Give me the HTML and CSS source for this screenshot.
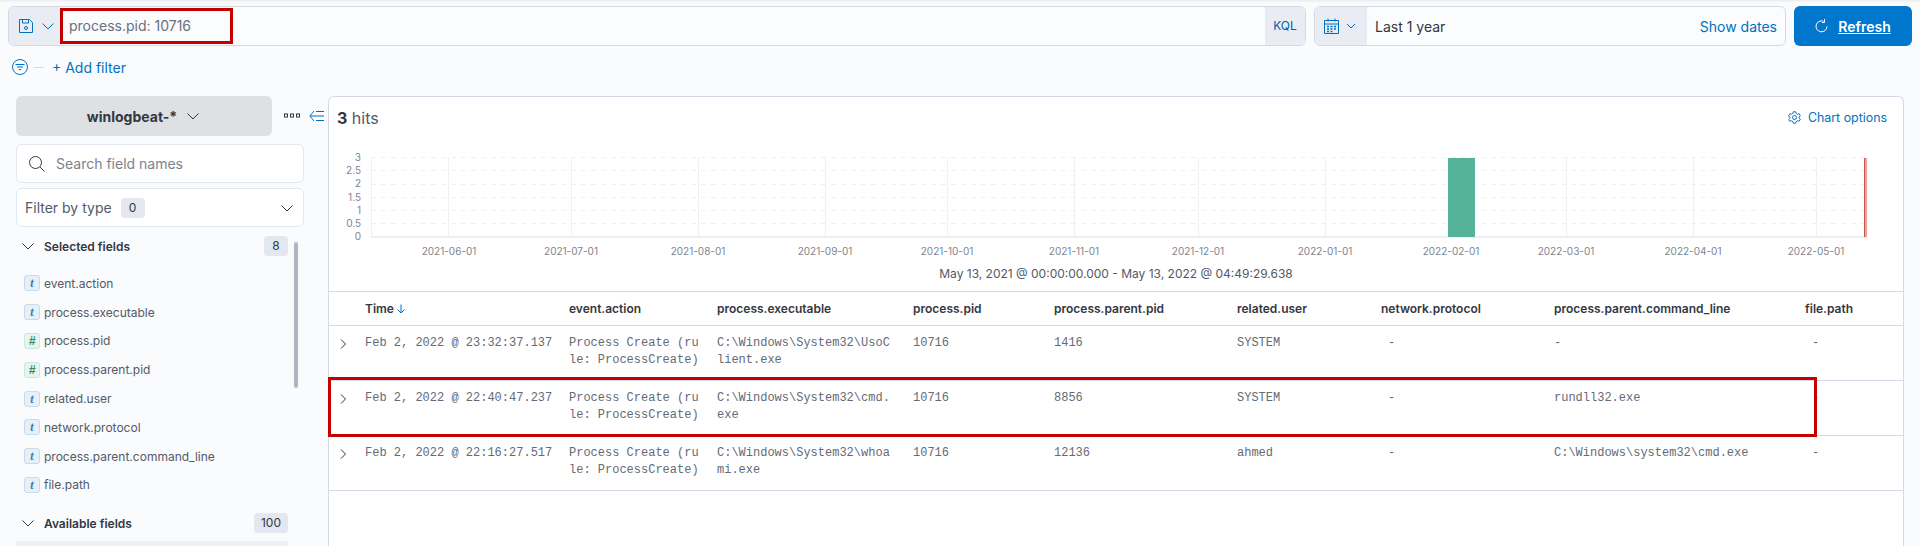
FILE: index.html
```html
<!DOCTYPE html>
<html lang="en">
<head>
  <meta charset="UTF-8" />
  <title>Discover</title>
  <link rel="stylesheet" href="styles.css">
</head>
<body>
  <div class="top-bar">
    <div class="query-group">
      <div class="save-btn">
        <svg width="16" height="16" viewBox="0 0 16 16" fill="none" stroke="#0071c2"><path d="M1.5 1.5h10l3 3v10h-13z"/><path d="M4.5 1.5v3.5h6v-3.5"/><circle cx="8" cy="10" r="1.5"/></svg>
        <svg class="chev" width="14" height="14" viewBox="0 0 14 14" fill="none" stroke="#0071c2"><path d="M1.5 4.5 7 10l5.5-5.5"/></svg>
      </div>
      <div class="query-input">process.pid: 10716</div>
      <div class="kql">KQL</div>
      <div class="query-mark"></div>
    </div>
    <div class="date-group">
      <div class="date-btn">
        <svg width="15" height="16" viewBox="0 0 15 16" fill="none" stroke="#0071c2"><path d="M.5 2.5h14v13H.5zM.5 6h14M4 .5v3M11 .5v3"/><path d="M3 8.500h2M6.500 8.500h2M10 8.500h2M3 11h2M6.500 11h2M10 11h2M3 13.500h2M6.500 13.500h2" stroke-width="1.400"/></svg>
        <svg width="10" height="10" viewBox="0 0 10 10" fill="none" stroke="#0071c2"><path d="M1 3l4 4 4-4"/></svg>
      </div>
      <div class="date-text">Last 1 year</div>
      <div class="show-dates">Show dates</div>
    </div>
    <div class="refresh-btn">
      <svg width="13" height="14" viewBox="0 0 13 14" fill="none" stroke="#fff"><path d="M8.500 2.200A5.500 5.500 0 1 0 12 7.500"/><path d="M9.500 0v3.500H6.800"/></svg>
      <span>Refresh</span>
    </div>
  </div>

  <div class="filter-bar">
    <svg width="16" height="16" viewBox="0 0 16 16" fill="none" stroke="#0071c2"><circle cx="8" cy="8" r="7.500"/><path d="M3.500 5.500h9M5 8h6M6.800 10.500h2.400"/></svg>
    <span class="filter-dash"></span>
    <span class="add-filter">+ Add filter</span>
  </div>

  <div class="main">
    <div class="sidebar">
      <div class="index-row">
        <div class="index-btn">
          <span>winlogbeat-*</span>
          <svg width="12" height="12" viewBox="0 0 12 12" fill="none" stroke="#343741"><path d="M.5 3.500 6 9l5.500-5.500"/></svg>
        </div>
        <svg class="dots" width="16" height="6" viewBox="0 0 16 6" fill="none" stroke="#343741"><rect x=".5" y="1" width="3" height="3"/><rect x="6.500" y="1" width="3" height="3"/><rect x="12.500" y="1" width="3" height="3"/></svg>
        <svg class="collapse" width="15" height="12" viewBox="0 0 15 12" fill="none" stroke="#0071c2"><path d="M5 1 .8 6 5 11M1 6h14M7 1.500h8M7 10.500h8"/></svg>
      </div>
      <div class="search-box">
        <svg width="16" height="16" viewBox="0 0 16 16" fill="none" stroke="#343741"><circle cx="6.500" cy="6.500" r="6"/><path d="m11 11 4.500 4.500"/></svg>
        <span>Search field names</span>
      </div>
      <div class="type-filter">
        <span>Filter by type</span>
        <span class="badge type-badge">0</span>
        <svg width="12" height="12" viewBox="0 0 12 12" fill="none" stroke="#343741"><path d="M.5 3.500 6 9l5.500-5.500"/></svg>
      </div>

      <div class="field-head selected-head">
        <svg width="12" height="12" viewBox="0 0 12 12" fill="none" stroke="#343741"><path d="M.5 3.500 6 9l5.500-5.500"/></svg>
        <span class="field-title">Selected fields</span>
        <span class="badge">8</span>
      </div>
      <div class="scrollbar"></div>
      <ul class="field-list">
        <li><span class="token">t</span>event.action</li>
        <li><span class="token">t</span>process.executable</li>
        <li><span class="token num">#</span>process.pid</li>
        <li><span class="token num">#</span>process.parent.pid</li>
        <li><span class="token">t</span>related.user</li>
        <li><span class="token">t</span>network.protocol</li>
        <li><span class="token">t</span>process.parent.command_line</li>
        <li><span class="token">t</span>file.path</li>
      </ul>
      <div class="field-head">
        <svg width="12" height="12" viewBox="0 0 12 12" fill="none" stroke="#343741"><path d="M.5 3.500 6 9l5.500-5.500"/></svg>
        <span class="field-title">Available fields</span>
        <span class="badge">100</span>
      </div>
      <div class="field-highlight"></div>
    </div>

    <div class="panel">
      <div class="hits-row">
        <div class="hits"><b>3</b> hits</div>
        <div class="chart-options">
          <svg width="13" height="13" viewBox="0 0 16 16" fill="none" stroke="#0071c2" stroke-width="1.200"><circle cx="8" cy="8" r="2.500"/><path d="M6.500 1h3l.5 2 1.700 1 2-.6 1.500 2.600-1.500 1.400v1.200l1.500 1.400-1.500 2.600-2-.6-1.700 1-.5 2h-3l-.5-2-1.700-1-2 .6L.8 10.600l1.500-1.400V8L.8 6l1.500-2.600 2 .6L6 3z"/></svg>
          <span>Chart options</span>
        </div>
      </div>

      <svg class="chart" width="1574" height="163" viewBox="329 128 1574 163">
        <g stroke="#f0f1f4" stroke-dasharray="5 5">
          <path d="M371 157.500H1867M371 170.500H1867M371 184.500H1867M371 197.500H1867M371 210.500H1867M371 223.500H1867"/>
        </g>
        <g stroke="#eef0f3">
          <path d="M371.500 157V237M448.500 157V237M571.500 157V237M698.500 157V237M825.500 157V237M947.500 157V237M1074.500 157V237M1198.500 157V237M1325.500 157V237M1452.500 157V237M1566.500 157V237M1693.500 157V237M1816.500 157V237"/>
          <path d="M371 237H1867" stroke-width="2"/>
        </g>
        <rect x="1448" y="158" width="27" height="79" fill="#54b399"/>
        <rect x="1864" y="158" width="1" height="79" fill="#c8544a"/>
        <rect x="1865" y="158" width="2" height="79" fill="#e7a49d"/>
        <g class="y-labels">
          <text x="361" y="161">3</text>
          <text x="361" y="174">2.5</text>
          <text x="361" y="187">2</text>
          <text x="361" y="201">1.5</text>
          <text x="361" y="214">1</text>
          <text x="361" y="227">0.5</text>
          <text x="361" y="240">0</text>
        </g>
        <g class="x-labels">
          <text x="449" y="255">2021-06-01</text>
          <text x="571" y="255">2021-07-01</text>
          <text x="698" y="255">2021-08-01</text>
          <text x="825" y="255">2021-09-01</text>
          <text x="947" y="255">2021-10-01</text>
          <text x="1074" y="255">2021-11-01</text>
          <text x="1198" y="255">2021-12-01</text>
          <text x="1325" y="255">2022-01-01</text>
          <text x="1451" y="255">2022-02-01</text>
          <text x="1566" y="255">2022-03-01</text>
          <text x="1693" y="255">2022-04-01</text>
          <text x="1816" y="255">2022-05-01</text>
        </g>
        <text class="range-label" x="1116" y="278">May 13, 2021 @ 00:00:00.000 - May 13, 2022 @ 04:49:29.638</text>
      </svg>

      <table class="docs">
        <colgroup>
          <col class="c-toggle"><col class="c-time"><col class="c-action"><col class="c-exec"><col class="c-pid">
          <col class="c-ppid"><col class="c-user"><col class="c-net"><col class="c-cmd"><col class="c-file">
        </colgroup>
        <thead>
          <tr>
            <th></th>
            <th>Time <svg width="10" height="10" viewBox="0 0 10 10" fill="none" stroke="#0071c2"><path d="M5 .5V9M1.500 5.500 5 9l3.500-3.500"/></svg></th>
            <th>event.action</th>
            <th>process.executable</th>
            <th>process.pid</th>
            <th>process.parent.pid</th>
            <th>related.user</th>
            <th>network.protocol</th>
            <th>process.parent.command_line</th>
            <th>file.path</th>
          </tr>
        </thead>
        <tbody>
          <tr>
            <td class="toggle"><svg width="6" height="10" viewBox="0 0 6 10" fill="none" stroke="#343741"><path d="m1 .5 4.500 4.500L1 9.500"/></svg></td>
            <td class="time">Feb 2, 2022 @ 23:32:37.137</td>
            <td>Process Create (rule: ProcessCreate)</td>
            <td>C:\Windows\System32\UsoClient.exe</td>
            <td>10716</td>
            <td>1416</td>
            <td>SYSTEM</td>
            <td class="dash">-</td>
            <td>-</td>
            <td class="dash">-</td>
          </tr>
          <tr>
            <td class="toggle"><svg width="6" height="10" viewBox="0 0 6 10" fill="none" stroke="#343741"><path d="m1 .5 4.500 4.500L1 9.500"/></svg></td>
            <td class="time">Feb 2, 2022 @ 22:40:47.237</td>
            <td>Process Create (rule: ProcessCreate)</td>
            <td>C:\Windows\System32\cmd.exe</td>
            <td>10716</td>
            <td>8856</td>
            <td>SYSTEM</td>
            <td class="dash">-</td>
            <td>rundll32.exe</td>
            <td class="dash">-</td>
          </tr>
          <tr>
            <td class="toggle"><svg width="6" height="10" viewBox="0 0 6 10" fill="none" stroke="#343741"><path d="m1 .5 4.500 4.500L1 9.500"/></svg></td>
            <td class="time">Feb 2, 2022 @ 22:16:27.517</td>
            <td>Process Create (rule: ProcessCreate)</td>
            <td>C:\Windows\System32\whoami.exe</td>
            <td>10716</td>
            <td>12136</td>
            <td>ahmed</td>
            <td class="dash">-</td>
            <td>C:\Windows\system32\cmd.exe</td>
            <td class="dash">-</td>
          </tr>
        </tbody>
      </table>
      <div class="row-mark"></div>
    </div>
  </div>
</body>
</html>
```

FILE: styles.css
```css
* {
  box-sizing: border-box;
}

html, body {
  height: 100%;
}

body {
  margin: 0;
  overflow: hidden;
  font-family: Inter, "Liberation Sans", sans-serif;
  font-size: 14px;
  color: #343741;
  background-color: #fafbfd;
  box-shadow: inset 0 3px 3px -2px rgba(0, 0, 0, 0.08);
}

/* top bar */
.top-bar {
  display: flex;
  gap: 8px;
  height: 46px;
  padding: 6px 8px 0;
}

.query-group {
  position: relative;
  display: flex;
  width: 1298px;
  height: 40px;
  background: #fbfcfd;
  border: 1px solid #d3dae6;
  border-radius: 6px;
  overflow: hidden;
}

.save-btn {
  display: flex;
  align-items: center;
  gap: 7px;
  width: 51px;
  padding-left: 9px;
  background: #e9edf3;
}

.query-input {
  flex: 1;
  padding-left: 9px;
  line-height: 38px;
  color: #69707d;
}

.kql {
  width: 40px;
  font-size: 12px;
  line-height: 38px;
  text-align: center;
  color: #0061a6;
  background: #e9edf3;
}

.query-mark {
  position: absolute;
  left: 51px;
  top: 1px;
  width: 173px;
  height: 36px;
  border: 3px solid #c40000;
}

.date-group {
  display: flex;
  align-items: center;
  width: 472px;
  height: 40px;
  background: #fbfcfd;
  border: 1px solid #d3dae6;
  border-radius: 6px;
  overflow: hidden;
}

.date-btn {
  display: flex;
  align-items: center;
  gap: 7px;
  width: 52px;
  height: 100%;
  padding-left: 9px;
  background: #e9edf3;
}

.date-text {
  flex: 1;
  padding-left: 8px;
  color: #343741;
}

.show-dates {
  padding-right: 8px;
  color: #0071c2;
}

.refresh-btn {
  display: flex;
  align-items: center;
  justify-content: center;
  gap: 10px;
  flex: 1;
  height: 40px;
  font-weight: 600;
  color: #fff;
  background: #0077cc;
  border-radius: 6px;
}

.refresh-btn span {
  text-decoration: underline;
}

/* filter bar */
.filter-bar {
  display: flex;
  align-items: center;
  height: 50px;
  padding: 0 12px 8px;
}

.filter-dash {
  width: 10px;
  height: 1px;
  margin: 0 8px 0 6px;
  background: #d3dae6;
}

.add-filter {
  color: #0071c2;
}

/* layout */
.main {
  display: flex;
  height: 450px;
}

.sidebar {
  position: relative;
  flex: none;
  width: 328px;
  padding-left: 16px;
}

.index-row {
  display: flex;
  align-items: center;
}

.index-btn {
  display: flex;
  align-items: center;
  justify-content: center;
  gap: 10px;
  width: 256px;
  height: 40px;
  padding-right: 2px;
  font-weight: 700;
  background: #dfe0e4;
  border-radius: 6px;
}

.dots {
  margin-left: 12px;
}

.collapse {
  margin-left: 9px;
}

.search-box {
  display: flex;
  align-items: center;
  gap: 11px;
  width: 288px;
  height: 39px;
  margin-top: 8px;
  padding-left: 12px;
  color: #7b828e;
  background: #fff;
  border: 1px solid #e4e8f0;
  border-radius: 6px;
}

.type-filter {
  display: flex;
  align-items: center;
  width: 288px;
  height: 39px;
  margin-top: 5px;
  padding: 0 10px 0 8px;
  color: #535966;
  background: #fff;
  border: 1px solid #e4e8f0;
  border-radius: 6px;
}

.type-badge {
  margin-left: 9px;
  margin-right: auto;
}

.badge {
  min-width: 24px;
  padding: 0 7px;
  font-size: 12px;
  line-height: 20px;
  text-align: center;
  color: #343741;
  background: #e3e7ef;
  border-radius: 4px;
}

.field-head {
  display: flex;
  align-items: center;
  width: 272px;
  height: 20px;
  padding-left: 6px;
}

.selected-head {
  margin-top: 9px;
}

.field-title {
  flex: 1;
  margin-left: 10px;
  font-size: 12px;
  font-weight: 600;
}

.scrollbar {
  position: absolute;
  left: 294px;
  top: 146px;
  width: 4px;
  height: 146px;
  background: #b1b6c0;
  border-radius: 2px;
}

.field-list {
  margin: 13px 0 14px;
  padding: 0;
  list-style: none;
}

.field-list li {
  display: flex;
  align-items: center;
  height: 28.8px;
  padding-left: 8px;
  font-size: 12px;
  color: #535966;
}

.token {
  width: 16px;
  height: 16px;
  margin-right: 4px;
  font-family: "Liberation Serif", serif;
  font-size: 12px;
  font-style: italic;
  font-weight: 700;
  line-height: 14px;
  text-align: center;
  color: #3e7ba6;
  background: #e6f0f8;
  border: 1px solid #c6dced;
  border-radius: 3px;
}

.token.num {
  font-family: "Liberation Sans", sans-serif;
  color: #2f8a6b;
  background: #e6f5f0;
  border-color: #cbe9de;
}

.field-highlight {
  width: 272px;
  height: 8px;
  margin-top: 8px;
  background: #e9f2f9;
}

/* main panel */
.panel {
  position: relative;
  width: 1576px;
  background: #fff;
  border: 1px solid #d3dae6;
  border-bottom: none;
  border-radius: 6px 6px 0 0;
}

.hits-row {
  display: flex;
  align-items: center;
  justify-content: space-between;
  height: 31px;
  padding: 10px 16px 0 8px;
}

.hits {
  font-size: 16px;
  color: #535966;
}

.hits b {
  color: #343741;
}

.chart-options {
  display: flex;
  align-items: center;
  gap: 7px;
  font-size: 12.4px;
  color: #0071c2;
}

.chart {
  display: block;
}

.y-labels text {
  font-size: 10px;
  text-anchor: end;
  fill: #7e8490;
}

.x-labels text {
  font-size: 10px;
  text-anchor: middle;
  fill: #7e8490;
}

.range-label {
  font-size: 12px;
  text-anchor: middle;
  fill: #535966;
}

/* documents table */
.docs {
  width: 1574px;
  table-layout: fixed;
  border-collapse: collapse;
  border-top: 1px solid #d3dae6;
}

.c-toggle { width: 36px; }
.c-time { width: 204px; }
.c-action { width: 148px; }
.c-exec { width: 196px; }
.c-pid { width: 141px; }
.c-ppid { width: 183px; }
.c-user { width: 144px; }
.c-net { width: 173px; }
.c-cmd { width: 251px; }
.c-file { width: 98px; }

.docs th {
  height: 34px;
  padding: 0;
  font-size: 12px;
  font-weight: 600;
  text-align: left;
  border-bottom: 1px solid #d3dae6;
}

.docs th svg {
  margin-left: -1px;
  vertical-align: -1px;
}

.docs td {
  height: 55px;
  padding: 9px 18px 0 0;
  font-family: "Liberation Mono", monospace;
  font-size: 12px;
  line-height: 17px;
  vertical-align: top;
  word-break: break-all;
  color: #646a76;
  border-bottom: 1px solid #d3dae6;
}

.docs td.time {
  white-space: nowrap;
}

.docs td.toggle {
  padding: 12px 0 0 11px;
}

.docs td.dash {
  padding-left: 7px;
}

.row-mark {
  position: absolute;
  left: -1px;
  top: 280px;
  width: 1489px;
  height: 60px;
  border: 3px solid #c40000;
}
```
